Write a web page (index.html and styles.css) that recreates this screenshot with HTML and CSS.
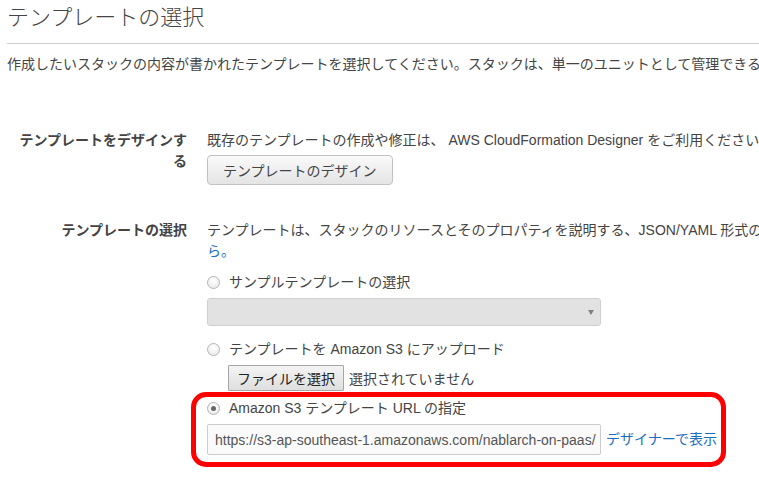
FILE: index.html
```html
<!DOCTYPE html>
<html lang="ja">
<head>
<meta charset="utf-8">
<title>テンプレートの選択</title>
<link rel="stylesheet" href="styles.css">
</head>
<body>
<div class="page">
  <h1 class="title">テンプレートの選択</h1>
  <hr class="rule">
  <p class="desc">作成したいスタックの内容が書かれたテンプレートを選択してください。スタックは、単一のユニットとして管理できる AWS リソースの集合です。</p>

  <div class="row row-design">
    <div class="label">テンプレートをデザインする</div>
    <div class="field">
      <p class="line">既存のテンプレートの作成や修正は、 AWS CloudFormation Designer をご利用ください。</p>
      <button class="btn" type="button">テンプレートのデザイン</button>
    </div>
  </div>

  <div class="row row-choose">
    <div class="label">テンプレートの選択</div>
    <div class="field">
      <p class="line">テンプレートは、スタックのリソースとそのプロパティを説明する、JSON/YAML 形式のテキストファイルです。<a class="link" href="#">詳細はこち</a><br><a class="link" href="#">ら。</a></p>

      <label class="radio-line opt-sample"><input class="radio" type="radio" name="src"><span>サンプルテンプレートの選択</span></label>
      <div class="select"><span class="arrow"></span></div>

      <label class="radio-line opt-upload"><input class="radio" type="radio" name="src"><span>テンプレートを Amazon S3 にアップロード</span></label>
      <div class="file-row">
        <span class="file-btn">ファイルを選択</span>
        <span class="file-name">選択されていません</span>
      </div>

      <div class="url-group">
        <label class="radio-line opt-url"><input class="radio" type="radio" name="src" checked><span>Amazon S3 テンプレート URL の指定</span></label>
        <div class="url-row">
          <div class="url-input">https://s3-ap-southeast-1.amazonaws.com/nablarch-on-paas/</div>
          <a class="link view-link" href="#">デザイナーで表示</a>
        </div>
        <div class="highlight"></div>
      </div>
    </div>
  </div>
</div>
</body>
</html>
```

FILE: styles.css
```css
html {
  margin: 0;
  padding: 0;
  background: #fff;
}

body {
  margin: 0;
  padding: 0;
  overflow: hidden;
  background: #fff;
  font-family: "Liberation Sans", "Noto Sans CJK JP", sans-serif;
  font-size: 14px;
  color: #444;
}

.page {
  width: 1100px;
  min-height: 480px;
  padding-left: 7px;
  padding-top: 3px;
}

.title {
  margin: 0;
  font-size: 22px;
  font-weight: 300;
  line-height: 30px;
  color: #444;
  white-space: nowrap;
}

.rule {
  margin: 10px 0 0 0;
  border: 0;
  border-top: 1px solid #cccccc;
  height: 0;
}

.desc {
  margin: 10px 0 0 0;
  line-height: 20px;
  white-space: nowrap;
}

.row {
  display: flex;
  gap: 20px;
}

.row-design {
  margin-top: 56px;
}

.row-choose {
  margin-top: 35px;
}

.label {
  width: 180px;
  flex: none;
  text-align: right;
  font-weight: bold;
  line-height: 21px;
  color: #444;
}

.field {
  display: flex;
  flex-direction: column;
  align-items: flex-start;
}

.line {
  margin: 0;
  line-height: 21px;
  white-space: nowrap;
}

.link {
  color: #1a6ec0;
  text-decoration: none;
}

.btn {
  margin-top: 4px;
  height: 30px;
  padding: 0 15px;
  font-family: inherit;
  font-size: 14px;
  color: #444;
  background: linear-gradient(#fafafa, #e4e4e4);
  border: 1px solid #c2c2c2;
  border-radius: 4px;
}

.radio-line {
  display: flex;
  align-items: center;
  gap: 9px;
  line-height: 21px;
  white-space: nowrap;
}

.radio {
  appearance: none;
  -webkit-appearance: none;
  margin: 0;
  width: 13px;
  height: 13px;
  border-radius: 50%;
  border: 1px solid #b5b5b5;
  background: radial-gradient(circle at 50% 35%, #ffffff, #e6e6e6);
  box-sizing: border-box;
  display: grid;
  place-items: center;
}

.radio:checked::after {
  content: "";
  width: 5px;
  height: 5px;
  border-radius: 50%;
  background: #666;
}

.opt-sample {
  margin-top: 10px;
}

.select {
  margin-top: 5px;
  width: 394px;
  height: 28px;
  box-sizing: border-box;
  background: #e2e2e2;
  border: 1px solid #d0d0d0;
  border-radius: 3px;
  display: flex;
  align-items: center;
  justify-content: flex-end;
  padding-right: 6px;
}

.arrow {
  width: 0;
  height: 0;
  border-left: 3px solid transparent;
  border-right: 3px solid transparent;
  border-top: 5px solid #808080;
}

.opt-upload {
  margin-top: 13px;
}

.file-row {
  margin-top: 5px;
  margin-left: 21px;
  display: flex;
  align-items: center;
  gap: 5px;
  white-space: nowrap;
}

.file-btn {
  height: 26px;
  box-sizing: border-box;
  padding: 0 8px;
  display: flex;
  align-items: center;
  background: linear-gradient(#f4f4f4, #dedede);
  border: 1px solid #a6a6a6;
  border-radius: 1px;
  color: #222;
}

.file-name {
  color: #444;
}

.url-group {
  position: relative;
  margin-top: 7px;
}

.url-row {
  margin-top: 5px;
  display: flex;
  align-items: center;
  gap: 5px;
  white-space: nowrap;
}

.url-input {
  width: 394px;
  height: 31px;
  box-sizing: border-box;
  padding-left: 7px;
  display: flex;
  align-items: center;
  overflow: hidden;
  background: #fafafa;
  border: 1px solid #cccccc;
  border-radius: 2px;
  color: #555;
}

.view-link {
  line-height: 21px;
}

.highlight {
  position: absolute;
  left: -16px;
  top: -6px;
  width: 535px;
  height: 75px;
  box-sizing: border-box;
  border: 5px solid #ff0000;
  border-radius: 15px;
  pointer-events: none;
}
```
